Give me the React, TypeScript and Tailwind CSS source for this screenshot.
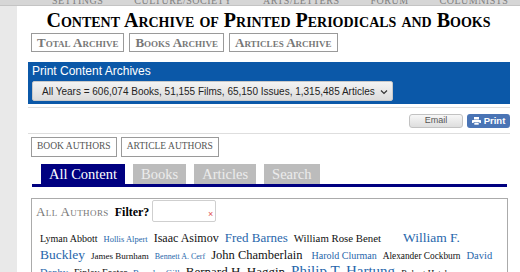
const navItems = ['Settings', 'Culture/Society', 'Arts/Letters', 'Forum', 'Columnists']

type Author = { name: string; size: string; blue?: boolean; gap?: string }

const authors: Author[] = [
  { name: 'Lyman Abbott', size: 'text-[10px]' },
  { name: 'Hollis Alpert', size: 'text-[8.5px]', blue: true },
  { name: 'Isaac Asimov', size: 'text-[12px]' },
  { name: 'Fred Barnes', size: 'text-[13px]', blue: true },
  { name: 'William Rose Benet', size: 'text-[10.8px]', gap: 'mr-[19px]' },
  { name: 'William F. Buckley', size: 'text-[13.5px]', blue: true },
  { name: 'James Burnham', size: 'text-[9px]' },
  { name: 'Bennett A. Cerf', size: 'text-[8px]', blue: true },
  { name: 'John Chamberlain', size: 'text-[12.5px]', gap: 'mr-[6px]' },
  { name: 'Harold Clurman', size: 'text-[10px]', blue: true },
  { name: 'Alexander Cockburn', size: 'text-[9.3px]' },
  { name: 'David Denby', size: 'text-[10.5px]', blue: true },
  { name: 'Finley Foster', size: 'text-[10px]' },
  { name: 'Brendan Gill', size: 'text-[9px]', blue: true },
  { name: 'Bernard H. Haggin', size: 'text-[13px]' },
  { name: 'Philip T. Hartung', size: 'text-[15px]', blue: true },
  { name: 'Robert Hatch', size: 'text-[9px]' },
]

const serif = "font-['Liberation_Serif',serif]"
const sans = "font-['Liberation_Sans',Arial,sans-serif]"

function ArchiveButton({ label }: { label: string }) {
  return (
    <span className="border border-[#9a9a9a] px-[5px] h-[19px] flex items-center text-[13px] font-bold text-[#777] [font-variant:small-caps] leading-none">
      {label}
    </span>
  )
}

function AuthorButton({ label }: { label: string }) {
  return (
    <span className="border border-[#9a9a9a] px-[5px] h-[20px] flex items-center text-[9.5px] text-[#555] leading-none">
      {label}
    </span>
  )
}

function Tab({ label, active }: { label: string; active?: boolean }) {
  return (
    <span
      className={
        active
          ? 'bg-[#000080] text-white px-2 h-[20px] flex items-center text-[14.5px] leading-none'
          : 'bg-[#bcbcbc] text-[#ececec] px-2 h-[20px] flex items-center text-[14.5px] leading-none'
      }
    >
      {label}
    </span>
  )
}

export default function App() {
  return (
    <div className={`w-[520px] h-[272px] overflow-hidden bg-white ${serif}`}>
      {/* top nav, mostly scrolled off */}
      <div className="h-[6px] overflow-hidden bg-[#d6d6d6] border-b border-[#c4c4c4]">
        <div className="flex gap-[31px] pl-[52px] -mt-[4px] text-[10px] leading-[10px] tracking-[0.5px] uppercase text-[#808080]">
          {navItems.map((n) => (
            <span key={n}>{n}</span>
          ))}
        </div>
      </div>

      <div className="flex h-full">
        <div className="w-[17px] flex-shrink-0 bg-[#e9e9e9]" />

        <div className="flex-1 pl-[11px] pr-[10px]">
          <h1 className="mt-[3px] text-center text-[20px] leading-[22px] font-bold text-black [font-variant:small-caps] pr-[1px]">
            Content Archive of Printed Periodicals and Books
          </h1>

          <div className="flex gap-[5px] mt-[2px] pl-[3px]">
            <ArchiveButton label="Total Archive" />
            <ArchiveButton label="Books Archive" />
            <ArchiveButton label="Articles Archive" />
          </div>

          <div className={`mt-[10px] bg-[#0b58a8] h-[42px] pt-[2px] pl-[4px] ${sans}`}>
            <div className="text-white text-[12px] leading-[14px]">Print Content Archives</div>
            <div className="mt-[3px] w-[361px] h-[20px] flex items-center gap-[5px] pl-[9px] rounded-[2px] border border-[#c8c8c8] bg-gradient-to-b from-[#f3f3f3] to-[#dcdcdc] text-[10px] text-[#222] whitespace-nowrap">
              <span>All Years = 606,074 Books, 51,155 Films, 65,150 Issues, 1,315,485 Articles</span>
              <svg width="8" height="6" viewBox="0 0 8 6" className="mt-[1px]">
                <path d="M1 1.5 L4 4.5 L7 1.5" fill="none" stroke="#333" strokeWidth="1.2" />
              </svg>
            </div>
          </div>

          <div className="mt-[3px] border-t border-[#dedede]" />

          <div className={`mt-[6px] flex justify-end gap-[4px] h-[14px] ${sans}`}>
            <span className="w-[54px] h-[14px] rounded-[3px] border border-[#c2c2c2] bg-gradient-to-b from-[#f7f7f7] to-[#dedede] flex items-center justify-center text-[9px] text-[#555]">
              Email
            </span>
            <span className="w-[43px] h-[14px] rounded-[3px] bg-[#4a74b5] flex items-center justify-center gap-[3px] text-[9.5px] font-bold text-white">
              <svg width="9" height="8" viewBox="0 0 9 8">
                <rect x="2" y="0" width="5" height="2.5" fill="white" />
                <rect x="0" y="3" width="9" height="3" rx="0.5" fill="white" />
                <rect x="2" y="5.5" width="5" height="2.5" fill="white" stroke="#4a74b5" strokeWidth="0.6" />
              </svg>
              Print
            </span>
          </div>

          <div className="mt-[5px] border-t border-[#dedede]" />

          <div className="flex gap-[4px] mt-[3px] pl-[3px]">
            <AuthorButton label="BOOK AUTHORS" />
            <AuthorButton label="ARTICLE AUTHORS" />
          </div>

          <div className="mt-[7px] ml-[4px] mr-[3px] border-b-[3px] border-[#000080] flex gap-[8px] pl-[9px]">
            <Tab label="All Content" active />
            <Tab label="Books" />
            <Tab label="Articles" />
            <Tab label="Search" />
          </div>

          <div className="mt-[11px] ml-[3px] mr-[2px] border border-[#ababab] pt-[1px] pb-2">
            <div className="flex items-center pl-[4px]">
              <span className="text-[13px] text-[#777] [font-variant:small-caps] tracking-[0.4px] mt-[2px]">
                All Authors
              </span>
              <span className="ml-[6px] text-[12px] font-bold text-black mt-[2px]">Filter?</span>
              <span className="relative ml-[3px] w-[64px] h-[22px] border border-[#cfcfcf] rounded-[2px] bg-white">
                <span className={`absolute right-[2px] bottom-[2px] text-[9px] leading-none text-[#e05050] ${sans}`}>×</span>
              </span>
            </div>
            <p className="mt-[8px] pl-[8px] pr-[6px] text-[12px] leading-[17px]">
              {authors.map((a) => (
                <span key={a.name}>
                  <span className={`${a.size} leading-none mr-[3px] ${a.gap ?? ''} ${a.blue ? 'text-[#2766ab]' : 'text-[#111]'}`}>
                    {a.name}
                  </span>{' '}
                </span>
              ))}
            </p>
          </div>
        </div>
      </div>
    </div>
  )
}
